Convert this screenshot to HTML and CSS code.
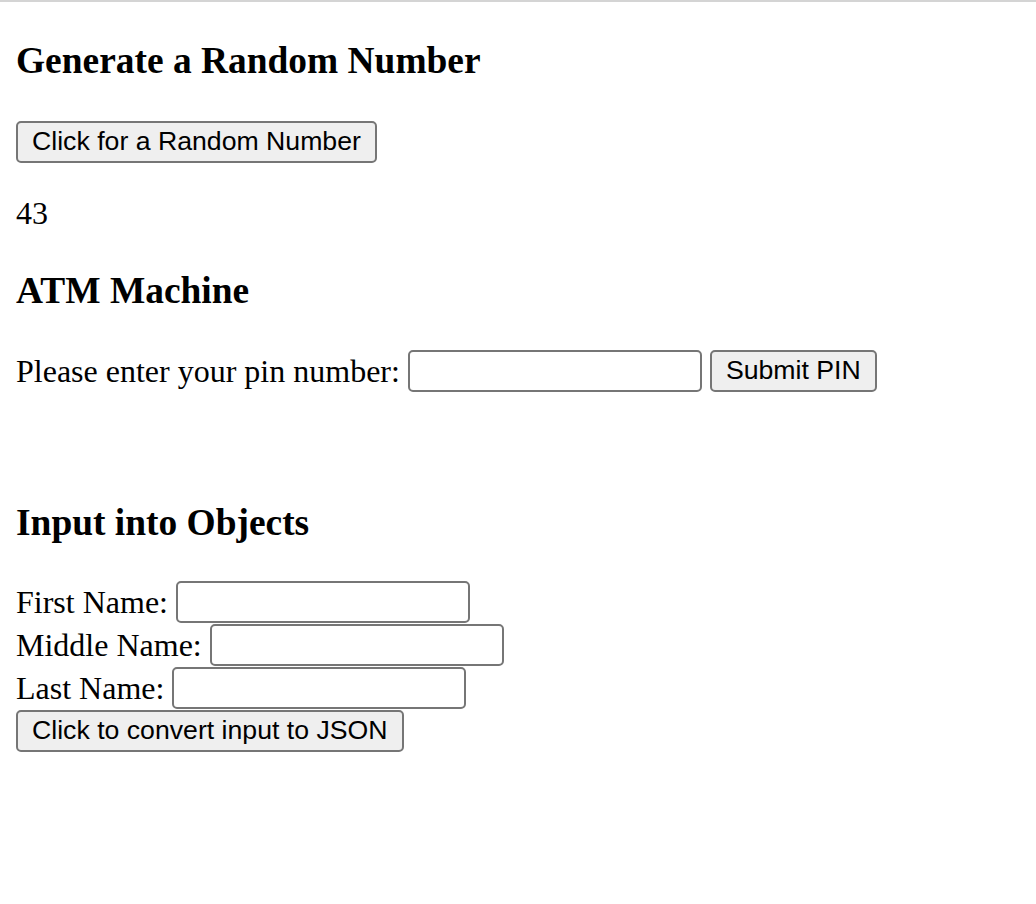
FILE: index.html
```html
<!DOCTYPE html>
<html lang="en">
<head>
<meta charset="utf-8">
<title>Random Number</title>
<link rel="stylesheet" href="styles.css">
</head>
<body class="page">
<div class="topline"></div>
<main class="content">
  <h3 class="title">Generate a Random Number</h3>
  <div class="action"><button class="btn" type="button">Click for a Random Number</button></div>
  <p class="result">43</p>

  <h3 class="title">ATM Machine</h3>
  <div class="row">Please enter your pin number:<input class="field" type="text"><button class="btn" type="button">Submit PIN</button></div>
  <p class="spacer">&nbsp;</p>

  <h3 class="title">Input into Objects</h3>
  <div class="form">
    <div class="form-row">First Name:<input class="field" type="text"></div>
    <div class="form-row">Middle Name:<input class="field" type="text"></div>
    <div class="form-row">Last Name:<input class="field" type="text"></div>
    <div class="form-row"><button class="btn" type="button">Click to convert input to JSON</button></div>
  </div>
</main>
</body>
</html>
```

FILE: styles.css
```css
html, body.page {
  margin: 0;
  padding: 0;
  background: #ffffff;
}
.page {
  font-family: "Liberation Serif", "Times New Roman", serif;
  font-size: 32px;
  line-height: 37px;
  color: #000;
}
.topline {
  height: 2px;
  background: #d4d4d4;
}
.content {
  padding: 0 16px 16px 16px;
}
.title {
  font-size: 37.44px;
  font-weight: bold;
  line-height: 43px;
  margin: 37px 0;
}
.action {
  display: flex;
  padding-top: 2px;
}
.btn {
  font-family: "Liberation Sans", Arial, sans-serif;
  font-size: 26.67px;
  line-height: 31px;
  color: #000;
  background: #efefef;
  border: 2px solid #767676;
  border-radius: 5px;
  padding: 1px 14px 3px 14px;
  margin: 0;
  height: 42px;
  box-sizing: border-box;
}
.result {
  margin: 32px 0;
}
.row {
  display: flex;
  align-items: center;
  height: 44px;
  margin: 32px 0;
}
.row .field {
  margin-left: 8px;
}
.row .btn {
  margin-left: 8px;
}
.spacer {
  margin: 32px 0;
  line-height: 39px;
}
.field {
  width: 294px;
  height: 42px;
  box-sizing: border-box;
  border: 2px solid #767676;
  border-radius: 5px;
  padding: 2px 4px;
  margin: 0;
  font-size: 26.67px;
  background: #fff;
}
.form {
  display: flex;
  flex-direction: column;
  gap: 1px;
}
.form-row {
  display: flex;
  align-items: center;
  height: 42px;
}
.form-row .field {
  margin-left: 8px;
}
```
